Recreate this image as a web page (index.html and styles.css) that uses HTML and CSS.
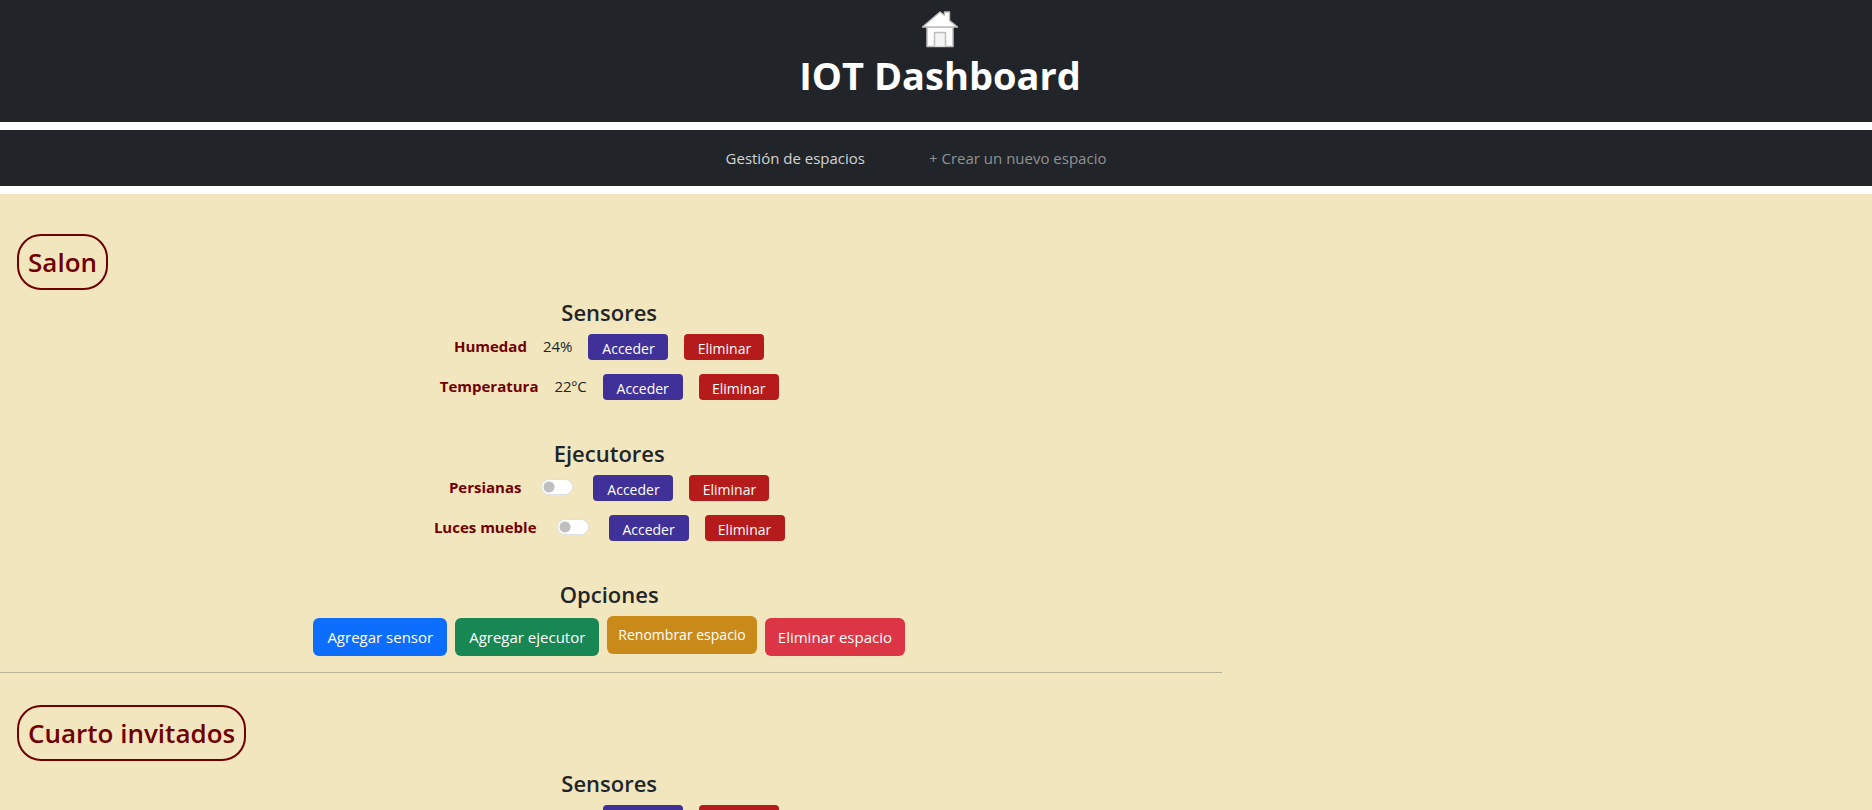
FILE: index.html
```html
<!DOCTYPE html>
<html lang="es">
<head>
<meta charset="utf-8">
<title>IOT Dashboard</title>
<link rel="stylesheet" href="styles.css">
</head>
<body>
<header class="header">
  <svg class="logo" viewBox="0 0 40 40" aria-hidden="true">
    <g fill="#fff" stroke="#bdbdbd" stroke-width="1.5" stroke-linejoin="round">
      <path d="M7 19h26v19.500H7z"/>
      <path d="M2.500 19 20 4l4.500 3.500V4h5v8.500l8 6.500z"/>
      <path d="M14.500 38.500V24.500h11v14" fill="#f4f4f4"/>
    </g>
  </svg>
  <h1 class="title">IOT Dashboard</h1>
</header>
<nav class="nav">
  <a class="nav-link current" href="#espacios">Gestión de espacios</a>
  <a class="nav-link" href="#nuevo">+ Crear un nuevo espacio</a>
</nav>
<main class="main" id="espacios">
  <section class="space">
    <h2 class="space-name">Salon</h2>
    <div class="group">
      <h3 class="group-title">Sensores</h3>
      <div class="row"><strong class="device">Humedad</strong><span class="value">24%</span><button class="btn-small open">Acceder</button><button class="btn-small remove">Eliminar</button></div>
      <div class="row"><strong class="device">Temperatura</strong><span class="value">22ºC</span><button class="btn-small open">Acceder</button><button class="btn-small remove">Eliminar</button></div>
    </div>
    <div class="group">
      <h3 class="group-title">Ejecutores</h3>
      <div class="row"><label class="device" for="persianas">Persianas</label><input class="switch" type="checkbox" role="switch" id="persianas"><button class="btn-small open">Acceder</button><button class="btn-small remove">Eliminar</button></div>
      <div class="row"><label class="device" for="luces">Luces mueble</label><input class="switch" type="checkbox" role="switch" id="luces"><button class="btn-small open">Acceder</button><button class="btn-small remove">Eliminar</button></div>
    </div>
    <div class="group options">
      <h3 class="group-title">Opciones</h3>
      <div class="actions">
        <button class="btn blue">Agregar sensor</button>
        <button class="btn green">Agregar ejecutor</button>
        <button class="btn amber">Renombrar espacio</button>
        <button class="btn red">Eliminar espacio</button>
      </div>
    </div>
  </section>
  <section class="space">
    <h2 class="space-name">Cuarto invitados</h2>
    <div class="group">
      <h3 class="group-title">Sensores</h3>
      <div class="row"><strong class="device">Temperatura</strong><span class="value">22ºC</span><button class="btn-small open">Acceder</button><button class="btn-small remove">Eliminar</button></div>
    </div>
  </section>
</main>
</body>
</html>
```
FILE: styles.css
```css
* { box-sizing: border-box; }
html { scrollbar-width: none; }
body {
  margin: 0;
  background: #fff;
  color: #212529;
  font: 15px/24px "Open Sans", "Noto Sans", sans-serif;
}
h1, h2, h3 { margin: 0; }
button { font: inherit; color: #fff; border: 0; cursor: pointer; }

.header {
  display: flex;
  flex-direction: column;
  align-items: center;
  padding: 8px 0 20px 8px;
  margin-bottom: 8px;
  background: #212529;
}
.logo { width: 40px; height: 40px; }
.title { color: #fff; font-size: 38px; line-height: 54px; font-weight: 700; }

.nav {
  display: flex;
  justify-content: center;
  gap: 64px;
  padding: 16px 40px 16px 0;
  margin-bottom: 8px;
  background: #212529;
}
.nav-link { color: #909294; text-decoration: none; }
.nav-link.current { color: #d3d3d4; }

.main { background: #f2e6be; padding-top: 8px; }
.space { width: 65.3%; padding-top: 32px; border-bottom: 1px solid #bbb398; }
.space-name {
  width: fit-content;
  margin-left: 17px;
  padding: 9px 9px 9px;
  border: 2px solid #700000;
  border-radius: 24px;
  color: #700000;
  font-size: 26px;
  line-height: 34px;
  font-weight: 600;
}
.group { padding: 8px 4px 17px 0; }
.group-title { text-align: center; font-size: 22px; line-height: 28px; font-weight: 600; margin-bottom: 8px; }
.row { display: flex; justify-content: center; align-items: flex-start; gap: 16px; height: 40px; }
.device { font-weight: 700; color: #700000; }
.btn-small { width: 80px; height: 26px; padding: 3px 0 0; border-radius: 4px; font-size: 14px; }
.open { background: #403199; }
.remove { background: #b51b1b; }
.switch {
  appearance: none;
  width: 32px;
  height: 16px;
  margin: 4px;
  border: 1px solid #dee2e6;
  border-radius: 8px;
  background: radial-gradient(circle at 7px 7px, #bfbfbf 5px, #fff 6px);
}
.switch:checked { background: radial-gradient(circle at 23px 7px, #fff 5px, #0d6efd 6px); }

.options { padding-bottom: 16px; }
.actions { display: flex; justify-content: center; align-items: flex-end; gap: 8px; }
.btn { height: 38px; padding: 0 14px; border-radius: 6px; }
.blue { background: #0d6efd; }
.green { background: #198754; }
.amber { background: #ca8a1a; margin-bottom: 2px; padding: 0 11px; font-size: 14px; }
.red { background: #dc3545; padding: 0 13px; }
```
